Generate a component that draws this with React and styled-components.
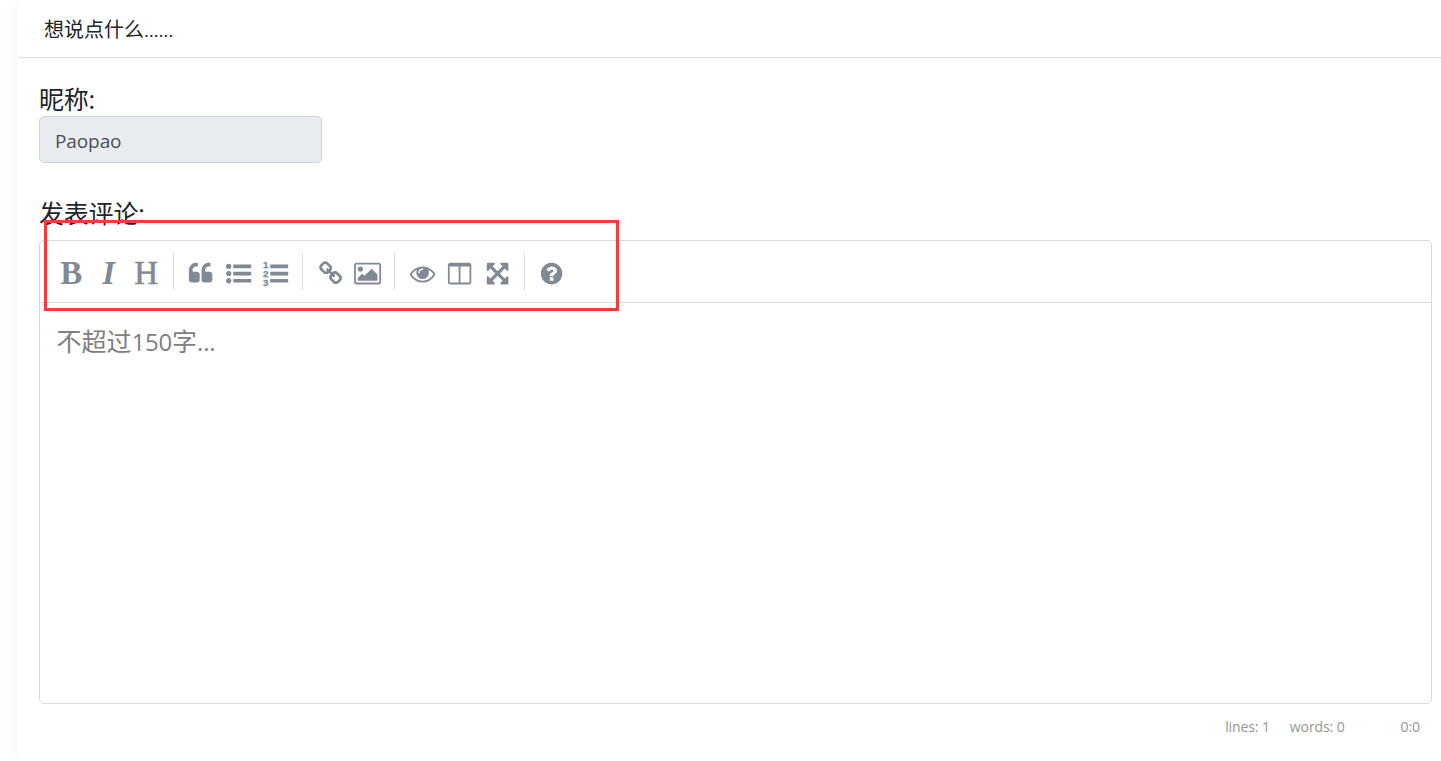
import React from "react";
import styled, { createGlobalStyle } from "styled-components";

const GlobalStyle = createGlobalStyle`
  * { box-sizing: border-box; }
  body {
    margin: 0;
    background: #fff;
    overflow: hidden;
    font-family: "Open Sans", "Noto Sans CJK SC", sans-serif;
    color: #212529;
  }
`;

const Page = styled.div`
  height: 761px;
  padding-left: 18px;
  overflow: hidden;
`;

const Card = styled.section`
  height: 100%;
  background: #fff;
  border-left: 1px solid #fefefe;
  box-shadow: 0 0 18px rgba(0, 0, 0, 0.05);
`;

const CardHeader = styled.header`
  height: 58px;
  padding: 1px 25px 0;
  border-bottom: 1px solid #dfdfdf;
  font-size: 20px;
  line-height: 57px;
`;

const Dots = styled.span`
  font-size: 18px;
  letter-spacing: 0.15px;
`;

const CardBody = styled.div`
  padding: 24px 9px 0 20px;
`;

const Label = styled.label`
  display: block;
  height: 34px;
  font-size: 25px;
  line-height: 34px;
  letter-spacing: -0.2px;
`;

const NameInput = styled.input`
  display: block;
  width: 283px;
  height: 47px;
  margin-bottom: 33px;
  padding: 3px 15px 0;
  border: 1px solid #ced4da;
  border-radius: 5px;
  background: #e9ecef;
  color: #495057;
  font: 19px "Open Sans", sans-serif;
  letter-spacing: -0.1px;
`;

const Editor = styled.div`
  position: relative;
  height: 464px;
  margin-top: 10px;
  border: 1px solid #d9d9d9;
  border-radius: 5px;
`;

const Toolbar = styled.div`
  display: flex;
  align-items: center;
  height: 62px;
  padding: 0 12.4px;
  border-bottom: 1px solid #d9d9d9;
`;

const ToolButton = styled.button`
  display: flex;
  align-items: center;
  justify-content: center;
  width: 37.5px;
  height: 37.5px;
  padding: 3px 0 0;
  border: 0;
  background: none;
  color: #818a94;
`;

const Letter = styled.span`
  font-family: "Liberation Serif", serif;
  font-size: 33px;
  line-height: 37px;
  font-weight: ${(p) => (p.$bold ? 700 : 400)};
  font-style: ${(p) => (p.$italic ? "italic" : "normal")};
  -webkit-text-stroke: ${(p) => p.$stroke || "0"} currentColor;
`;

const Separator = styled.i`
  width: 1px;
  height: 37px;
  margin: 0 8.1px 0 7.9px;
  background: #dedede;
`;

const Glyph = styled.svg`
  display: block;
  flex: none;
  width: 25.2px;
  height: 25.2px;
  margin-top: 0.6px;
  overflow: visible;
  fill: currentColor;
`;

const Digits = styled.text`
  font: 700 700px "Liberation Sans", sans-serif;
  stroke: currentColor;
  stroke-width: 20px;
`;

const Placeholder = styled.div`
  padding: 20px 17px 0 16.5px;
  color: #808080;
  font-size: 25px;
  line-height: 36px;
`;

const Numerals = styled.span`
  font-size: 24px;
  letter-spacing: -0.2px;
`;

const Highlight = styled.div`
  position: absolute;
  left: 4px;
  top: -21px;
  width: 575px;
  height: 91px;
  border: 3px solid #fd3939;
  pointer-events: none;
`;

const StatusBar = styled.footer`
  display: flex;
  justify-content: flex-end;
  padding: 12px 12px 0 0;
  color: #959694;
  font-size: 14px;
  line-height: 22px;
  letter-spacing: -0.1px;
`;

const Status = styled.span`
  margin-left: ${(p) => p.$gap || 0}px;
`;

const quote =
  "v384q0 80-56 136t-136 56h-384q-80 0-136-56t-56-136v-704q0-104 40.5-198.5t109.5-163.5 163.5-109.5 198.5-40.5h64q26 0 45 19t19 45v128q0 26-19 45t-45 19h-64q-106 0-181 75t-75 181v32q0 40 28 68t68 28h224q80 0 136 56t56 136z";
const bullet = "q0 80-56 136t-136 56-136-56-56-136 56-136 136-56 136 56 56 136z";
const bar =
  "v192q0 13-9.5 22.5t-22.5 9.5h-1216q-13 0-22.5-9.5t-9.5-22.5v-192q0-13 9.5-22.5t22.5-9.5h1216q13 0 22.5 9.5t9.5 22.5z";
const bars = `M1792 1312${bar}M1792 800${bar}M1792 288${bar}`;

const paths = {
  quote: `M832 960${quote}M1728 960${quote}`,
  list: `M384 1408${bullet}M384 896${bullet}M384 384${bullet}${bars}`,
  link: "M1520 1216q0-40-28-68l-208-208q-28-28-68-28-42 0-72 32 3 3 19 18.5t21.5 21.5 15 19 13 25.5 3.5 27.5q0 40-28 68t-68 28q-15 0-27.5-3.5t-25.5-13-19-15-21.5-21.5-18.5-19q-33 31-33 73 0 40 28 68l206 207q27 27 68 27 40 0 68-26l147-146q28-28 28-67zm-703-705q0-40-28-68l-206-207q-28-28-68-28-39 0-68 27l-147 146q-28 28-28 67 0 40 28 68l208 208q27 27 68 27 42 0 72-31-3-3-19-18.5t-21.5-21.5-15-19-13-25.5-3.5-27.5q0-40 28-68t68-28q15 0 27.5 3.5t25.5 13 19 15 21.5 21.5 18.5 19q33-31 33-73zm895 705q0 120-85 203l-147 146q-83 83-203 83-121 0-204-85l-206-207q-83-83-83-203 0-123 88-209l-88-88q-86 88-208 88-120 0-204-84l-208-208q-84-84-84-204t85-203l147-146q83-83 203-83 121 0 204 85l206 207q83 83 83 203 0 123-88 209l88 88q86-88 208-88 120 0 204 84l208 208q84 84 84 204z",
  image:
    "M576 576q0 80-56 136t-136 56-136-56-56-136 56-136 136-56 136 56 56 136zm1024 384v448h-1408v-192l320-320 160 160 512-512zm96-704h-1600q-13 0-22.5 9.5t-9.5 22.5v1216q0 13 9.5 22.5t22.5 9.5h1600q13 0 22.5-9.5t9.5-22.5v-1216q0-13-9.5-22.5t-22.5-9.5zm160 32v1216q0 66-47 113t-113 47h-1600q-66 0-113-47t-47-113v-1216q0-66 47-113t113-47h1600q66 0 113 47t47 113z",
  eye: "M1664 960q-152-236-381-353 61 104 61 225 0 185-131.5 316.5t-316.5 131.5-316.5-131.5-131.5-316.5q0-121 61-225-229 117-381 353 133 205 333.5 326.5t434.5 121.5 434.5-121.5 333.5-326.5zm-720-384q0-20-14-34t-34-14q-125 0-214.5 89.5t-89.5 214.5q0 20 14 34t34 14 34-14 14-34q0-86 61-147t147-61q20 0 34-14t14-34zm848 384q0 34-20 69-140 230-376.5 368.5t-499.5 138.5-499.5-139-376.5-368q-20-35-20-69t20-69q140-229 376.5-368t499.5-139 499.5 139 376.5 368q20 35 20 69z",
  columns:
    "M224 1536h608v-1152h-640v1120q0 13 9.5 22.5t22.5 9.5zm1376-32v-1120h-640v1152h608q13 0 22.5-9.5t9.5-22.5zm128-1216v1216q0 66-47 113t-113 47h-1344q-66 0-113-47t-47-113v-1216q0-66 47-113t113-47h1344q66 0 113 47t47 113z",
  expand:
    "M1411 541l-355 355 355 355 144-144q29-31 70-14 39 17 39 59v448q0 26-19 45t-45 19h-448q-42 0-59-40-17-39 14-69l144-144-355-355-355 355 144 144q31 30 14 69-17 40-59 40h-448q-26 0-45-19t-19-45v-448q0-42 40-59 39-17 69 14l144 144 355-355-355-355-144 144q-19 19-45 19-12 0-24-5-40-17-40-59v-448q0-26 19-45t45-19h448q42 0 59 40 17 39-14 69l-144 144 355 355 355-355-144-144q-31-30-14-69 17-40 59-40h448q26 0 45 19t19 45v448q0 42-39 59-13 5-25 5-26 0-45-19z",
  help: "M1024 1376v-192q0-14-9-23t-23-9h-192q-14 0-23 9t-9 23v192q0 14 9 23t23 9h192q14 0 23-9t9-23zm256-672q0-88-55.5-163t-138.5-116-170-41q-243 0-371 213-15 24 8 42l132 100q7 6 19 6 16 0 25-12 53-68 86-92 34-24 86-24 48 0 85.5 26t37.5 59q0 38-20 61t-68 45q-63 28-115.5 86.5t-52.5 125.5v36q0 14 9 23t23 9h192q14 0 23-9t9-23q0-19 21.5-49.5t54.5-49.5q32-18 49-28.5t46-35 44.5-48 28-60.5 12.5-81zm384 192q0 209-103 385.5t-279.5 279.5-385.5 103-385.5-103-279.5-279.5-103-385.5 103-385.5 279.5-279.5 385.5-103 385.5 103 279.5 279.5 103 385.5z",
};

function Tool({ name }) {
  return (
    <ToolButton type="button" aria-label={name}>
      <Glyph viewBox="0 0 1792 1792">
        <path d={paths[name]} />
      </Glyph>
    </ToolButton>
  );
}

function NumberedListTool() {
  return (
    <ToolButton type="button" aria-label="numbered list">
      <Glyph viewBox="0 0 1792 1792">
        <path d={bars} />
        <Digits x="-10" y="500">1</Digits>
        <Digits x="-10" y="1140">2</Digits>
        <Digits x="-10" y="1780">3</Digits>
      </Glyph>
    </ToolButton>
  );
}

export default function App() {
  return (
    <>
      <GlobalStyle />
      <Page>
        <Card>
          <CardHeader>
            想说点什么<Dots>......</Dots>
          </CardHeader>
          <CardBody>
            <Label htmlFor="nickname">昵称:</Label>
            <NameInput id="nickname" value="Paopao" readOnly />
            <Label as="div">发表评论:</Label>
            <Editor>
              <Toolbar>
                <ToolButton type="button"><Letter $bold>B</Letter></ToolButton>
                <ToolButton type="button"><Letter $bold $italic>I</Letter></ToolButton>
                <ToolButton type="button"><Letter $stroke="0.6px">H</Letter></ToolButton>
                <Separator />
                <Tool name="quote" />
                <Tool name="list" />
                <NumberedListTool />
                <Separator />
                <Tool name="link" />
                <Tool name="image" />
                <Separator />
                <Tool name="eye" />
                <Tool name="columns" />
                <Tool name="expand" />
                <Separator />
                <Tool name="help" />
              </Toolbar>
              <Placeholder>
                不超过<Numerals>150</Numerals>字<Numerals>...</Numerals>
              </Placeholder>
              <Highlight />
            </Editor>
            <StatusBar>
              <Status>lines: 1</Status>
              <Status $gap={20}>words: 0</Status>
              <Status $gap={56}>0:0</Status>
            </StatusBar>
          </CardBody>
        </Card>
      </Page>
    </>
  );
}
